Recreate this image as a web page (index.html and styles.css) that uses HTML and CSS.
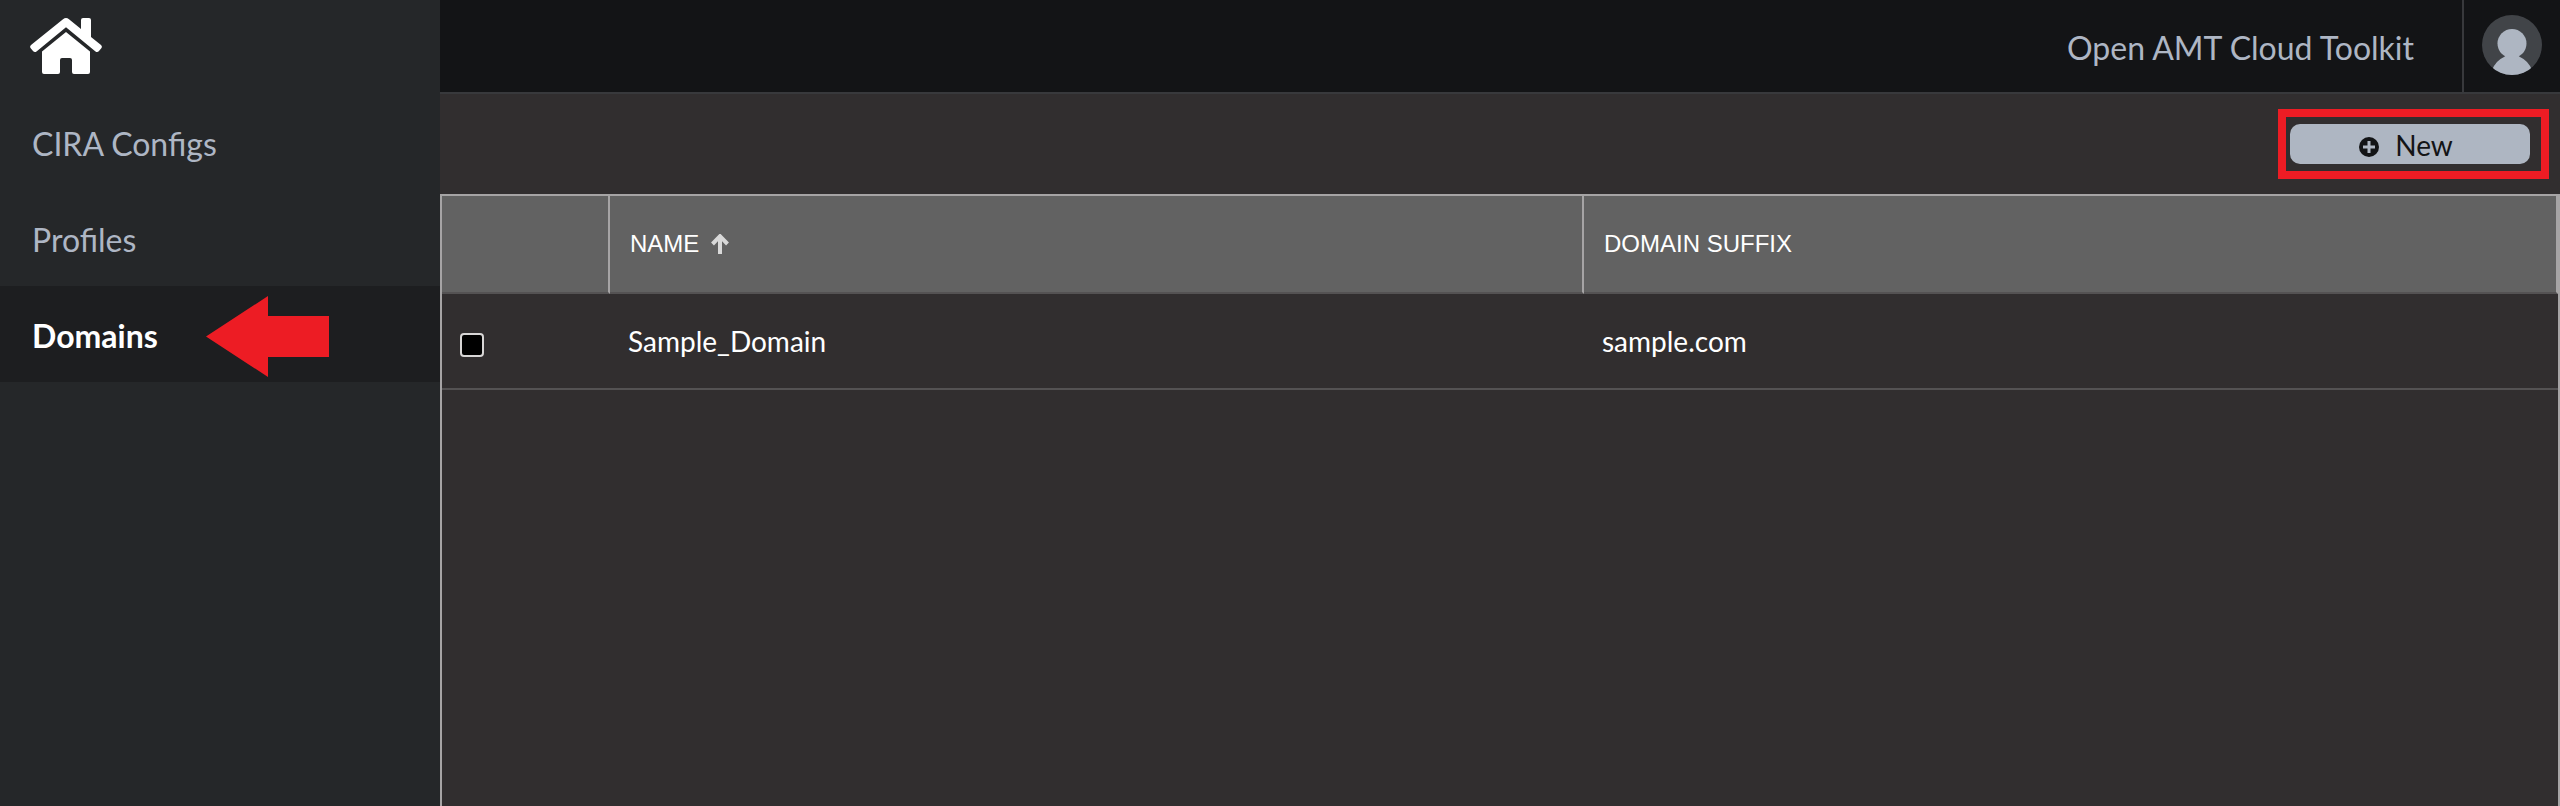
FILE: index.html
```html
<!DOCTYPE html>
<html lang="en">
<head>
<meta charset="utf-8">
<title>Open AMT Cloud Toolkit</title>
<link rel="stylesheet" href="styles.css">
</head>
<body>
<div class="app">
  <nav class="sidebar" aria-label="Main">
    <a class="home" href="#" aria-label="Home">
      <svg class="home-icon" viewBox="0 0 72 56" aria-hidden="true">
        <path d="M33 1.2Q36-1.200 39 1.200L51 11V2Q51 0 53 0H59Q61 0 61 2V19L71 27Q72.500 28.500 71.500 30L69 33Q67.500 34.800 65.500 33.500L36 9.300L6.500 33.500Q4.500 34.800 3 33L.5 30Q-.5 28.500 1 27Z"/>
        <path d="M36 14L60 33.500V54Q60 56 58 56H44Q42 56 42 54V42Q42 40 40 40H32Q30 40 30 42V54Q30 56 28 56H14Q12 56 12 54V33.500Z"/>
      </svg>
    </a>
    <a class="nav-item" href="#">CIRA Configs</a>
    <a class="nav-item" href="#">Profiles</a>
    <a class="nav-item active" href="#" aria-current="page">Domains
      <svg class="pointer" viewBox="0 0 123 81" aria-hidden="true"><path d="M0 40.500L62 0V20H123V61H62V81Z"/></svg>
    </a>
  </nav>
  <div class="main">
    <header class="topbar">
      <span class="brand">Open AMT Cloud Toolkit</span>
      <button class="account" type="button" aria-label="Account">
        <svg class="avatar" viewBox="0 0 60 60" aria-hidden="true">
          <defs><clipPath id="disc"><circle cx="30" cy="30" r="30"/></clipPath></defs>
          <g clip-path="url(#disc)">
            <rect class="avatar-back" width="60" height="60"/>
            <circle class="avatar-person" cx="30" cy="28.500" r="14.500"/>
            <path class="avatar-person" d="M22 38Q25 40.500 22 42Q14 45.500 10 55V60H50V55Q46 45.500 38 42Q35 40.500 38 38Z"/>
          </g>
        </svg>
      </button>
    </header>
    <div class="toolbar">
      <div class="highlight">
        <button class="new-button" type="button">
          <svg class="plus-icon" viewBox="0 0 20 20" aria-hidden="true"><circle cx="10" cy="10" r="10"/><path d="M10 4V16M4 10H16"/></svg>
          New
        </button>
      </div>
    </div>
    <div class="grid">
      <table class="domains">
        <colgroup><col class="col-check"><col><col></colgroup>
        <thead>
          <tr>
            <th scope="col" aria-label="Select"></th>
            <th scope="col" aria-sort="ascending"><span class="sorted">NAME
              <svg class="sort-icon" viewBox="0 0 18 20" aria-hidden="true"><path d="M9 20V3M1.500 10L9 2.200L16.500 10"/></svg></span></th>
            <th scope="col">DOMAIN SUFFIX</th>
          </tr>
        </thead>
        <tbody>
          <tr>
            <td class="check-cell"><input class="check" type="checkbox" aria-label="Select Sample_Domain"></td>
            <td>Sample_Domain</td>
            <td>sample.com</td>
          </tr>
        </tbody>
      </table>
    </div>
  </div>
</div>
</body>
</html>
```
FILE: styles.css
```css
* {
  box-sizing: border-box;
}

body {
  margin: 0;
  background: #312e2f;
  font-family: Lato, "Noto Sans", sans-serif;
}

.app {
  display: flex;
  min-height: 100vh;
}

/* Sidebar */
.sidebar {
  flex: 0 0 440px;
  background: #252729;
}

.home {
  display: block;
  height: 94px;
  padding: 18px 30px;
}

.home-icon {
  display: block;
  width: 72px;
  height: 56px;
  fill: #fff;
}

.nav-item {
  position: relative;
  display: flex;
  align-items: center;
  height: 96px;
  padding: 2px 32px 0;
  color: #aeb6c4;
  font-size: 32px;
  text-decoration: none;
}

.nav-item.active {
  background: #1d1e20;
  color: #fff;
  font-weight: 700;
}

.pointer {
  position: absolute;
  top: 10px;
  left: 206px;
  width: 123px;
  height: 81px;
  fill: #ed1c24;
}

/* Main area */
.main {
  display: flex;
  flex: 1;
  flex-direction: column;
  min-width: 0;
}

.topbar {
  display: flex;
  justify-content: flex-end;
  height: 94px;
  border-bottom: 2px solid #38393c;
  background: #131416;
}

.brand {
  padding: 28px 48px 0 0;
  color: #aeb6c4;
  font-size: 32px;
  line-height: 40px;
}

.account {
  width: 98px;
  padding: 0 18px 2px;
  border: 0;
  border-left: 2px solid #38393c;
  background: none;
}

.avatar {
  display: block;
  width: 60px;
  height: 60px;
}

.avatar-back {
  fill: #414448;
}

.avatar-person {
  fill: #aeb6c2;
}

.toolbar {
  display: flex;
  align-items: center;
  justify-content: flex-end;
  height: 100px;
  padding-right: 11px;
}

.highlight {
  padding: 7px 11px 7px 4px;
  border: 8px solid #ed1c24;
}

.new-button {
  display: flex;
  align-items: center;
  justify-content: center;
  gap: 16px;
  width: 240px;
  height: 40px;
  padding: 2px 8px 0 0;
  border: 0;
  border-radius: 10px;
  background: #aeb6c2;
  color: #131416;
  font-family: inherit;
  font-size: 28px;
}

.plus-icon {
  width: 20px;
  height: 20px;
  margin-top: 4px;
  fill: #131416;
}

.plus-icon path {
  stroke: #aeb6c2;
  stroke-width: 3;
}

/* Table */
.grid {
  flex: 1;
  border: 2px solid #a6a4a5;
  border-bottom: 0;
}

.domains {
  width: 100%;
  border-collapse: separate;
  border-spacing: 0;
  table-layout: fixed;
  color: #fff;
}

.col-check {
  width: 168px;
}

.domains th {
  height: 98px;
  padding: 0 20px;
  border-right: 2px solid #a6a4a5;
  border-bottom: 2px solid #545253;
  background: #626262;
  font-family: "Liberation Sans", Arial, sans-serif;
  font-size: 24px;
  font-weight: 400;
  text-align: left;
}

.domains td {
  height: 96px;
  padding: 0 18px;
  border-bottom: 2px solid #545253;
  font-size: 28px;
}

.sorted {
  display: flex;
  align-items: center;
  gap: 12px;
}

.sort-icon {
  width: 18px;
  height: 20px;
  fill: none;
  stroke: #d9d9d9;
  stroke-width: 4;
}

.domains .check-cell {
  padding: 8px 18px 0;
}

.check {
  display: block;
  width: 24px;
  height: 24px;
  margin: 0;
  border: 2px solid #d8d6d6;
  border-radius: 4px;
  background: #000;
  appearance: none;
}

.check:checked {
  background: #aeb6c2;
}
```
